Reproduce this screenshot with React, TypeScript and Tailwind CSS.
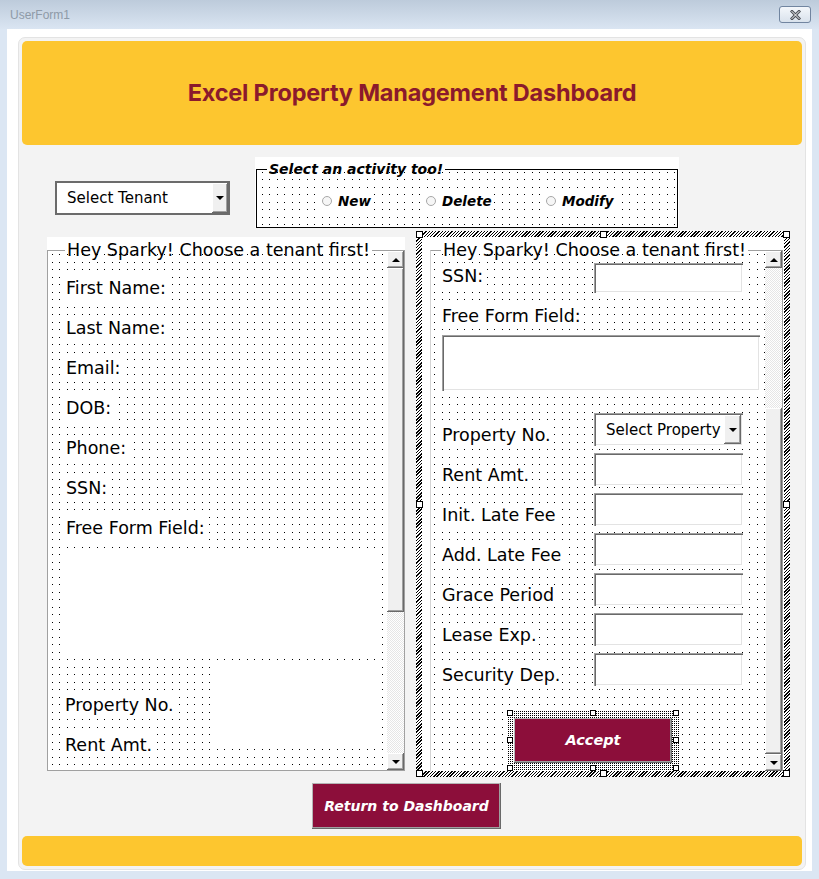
import React from "react";

const DOTS =
  "bg-white bg-[linear-gradient(90deg,#fff_7px,transparent_7px,transparent_8px,#fff_8px,#fff_14px,transparent_14px),linear-gradient(#fff_7px,#000_7px,#000_8px,#fff_8px,#fff_14px,#000_14px)] bg-[length:15px_15px] bg-fixed";

const COMIC = "font-['Comic_Sans_MS','DejaVu_Sans',sans-serif]";

const RAISED =
  "bg-[#f0f0f0] shadow-[inset_-1px_-1px_#696969,inset_1px_1px_#fff,inset_-2px_-2px_#a0a0a0]";

const SUNKEN =
  "bg-white shadow-[inset_1px_1px_#a0a0a0,inset_2px_2px_#696969,inset_-1px_-1px_#fff,inset_-2px_-2px_#e3e3e3]";

function Arrow({ up }: { up?: boolean }) {
  return up ? (
    <div className="w-0 h-0 border-x-[4px] border-x-transparent border-b-[4px] border-b-black" />
  ) : (
    <div className="w-0 h-0 border-x-[4px] border-x-transparent border-t-[4px] border-t-black" />
  );
}

function ScrollBtn({ up }: { up?: boolean }) {
  return (
    <div className={`w-[17px] h-[17px] shrink-0 flex items-center justify-center ${RAISED}`}>
      <Arrow up={up} />
    </div>
  );
}

function Track({ className }: { className: string }) {
  return (
    <div
      className={`w-[17px] bg-[repeating-conic-gradient(#e6e6e6_0_25%,#fff_0_50%)] bg-[length:2px_2px] ${className}`}
    />
  );
}

function Thumb({ className }: { className: string }) {
  return <div className={`w-[17px] ${RAISED} ${className}`} />;
}

function Legend({ children, left }: { children: React.ReactNode; left: string }) {
  return (
    <div
      className={`absolute -top-[13px] ${left} px-[2px] leading-[24px] text-[17.5px] text-black whitespace-nowrap bg-[linear-gradient(#fff_13px,transparent_13px)]`}
    >
      {children}
    </div>
  );
}

function Handle({ pos }: { pos: string }) {
  return <div className={`absolute w-[7px] h-[7px] bg-white border border-black ${pos}`} />;
}

function SmallHandle({ pos }: { pos: string }) {
  return <div className={`absolute w-[6px] h-[6px] bg-white border border-black ${pos}`} />;
}

function Label({ children }: { children: React.ReactNode }) {
  return (
    <span className="bg-white px-[2px] leading-[24px] text-[17.5px] text-black whitespace-nowrap">{children}</span>
  );
}

function Radio({ label }: { label: string }) {
  return (
    <span className="inline-flex items-center bg-white pr-[2px] leading-[18px]">
      <span className="w-[10px] h-[10px] rounded-full border border-[#a8a8a8] bg-[#f6f6f6] mr-[6px]" />
      {label}
    </span>
  );
}

const leftLabels = ["First Name:", "Last Name:", "Email:", "DOB:", "Phone:", "SSN:", "Free Form Field:"];
const rightRows = ["Rent Amt.", "Init. Late Fee", "Add. Late Fee", "Grace Period", "Lease Exp.", "Security Dep."];

export default function App() {
  return (
    <div className="w-[819px] h-[879px] bg-[#dbe6f3] flex flex-col overflow-hidden">
      {/* Title bar */}
      <div className="h-[29px] shrink-0 flex items-center justify-between pl-[10px] pr-[8px] bg-linear-to-b from-[#bdcbdb] to-[#dae5f2]">
        <span className="font-['Liberation_Sans',Arial,sans-serif] text-[12px] text-[#8e9aa7]">UserForm1</span>
        <div className="w-[32px] h-[17px] rounded-[3px] border border-[#7185a0] bg-linear-to-b from-[#f4f7fb] to-[#d9e2ec] flex items-center justify-center">
          <svg width="11" height="10" viewBox="0 0 11 10">
            <path d="M2 1.5 L9 8.5 M9 1.5 L2 8.5" stroke="#4a4f57" strokeWidth="3" strokeLinecap="square" />
            <path d="M2 1.5 L9 8.5 M9 1.5 L2 8.5" stroke="#ffffff" strokeWidth="1" strokeLinecap="square" />
          </svg>
        </div>
      </div>

      {/* Client area */}
      <div className="mx-[7px] h-[842px] bg-white pl-[11px] pt-[8px] pr-[6px] pb-[1px]">
        <div className="h-full border border-[#e3e3e3] rounded-[7px] bg-[#f3f3f3] p-[3px] flex flex-col">
          {/* Header */}
          <div className="h-[104px] shrink-0 rounded-[5px] bg-[#fdc62f] flex items-center justify-center">
            <h1 className="font-['Inter','Open_Sans',sans-serif] font-bold text-[23.5px] text-[#8b1a2c] tracking-[-0.2px]">
              Excel Property Management Dashboard
            </h1>
          </div>

          {/* Row 1 */}
          <div className={`flex items-start mt-[12px] pl-[33px] ${COMIC}`}>
            <div className="mt-[24px] w-[175px] h-[34px] border-2 border-[#6b6b6b] bg-white flex items-stretch">
              <div className="flex-1 flex items-center pl-[10px] text-[15px] text-black">Select Tenant</div>
              <div className={`w-[16px] flex items-center justify-center ${RAISED}`}>
                <Arrow />
              </div>
            </div>

            <div className="bg-white w-[424px] h-[71px] ml-[25px] pt-[12px] px-[1px]">
              <div className={`h-full border border-black relative ${DOTS}`}>
                <div className="absolute -top-[10px] left-[10px] px-[2px] leading-[18px] text-[14px] font-bold italic text-black whitespace-nowrap bg-[linear-gradient(#fff_10px,transparent_10px)]">
                  Select an activity too!
                </div>
                <div className="flex items-center pt-[21px] pl-[65px] text-[13.5px] font-bold italic text-black">
                  <div className="w-[104px]">
                    <Radio label="New" />
                  </div>
                  <div className="w-[120px]">
                    <Radio label="Delete" />
                  </div>
                  <div>
                    <Radio label="Modify" />
                  </div>
                </div>
              </div>
            </div>
          </div>

          {/* Row 2 */}
          <div className={`flex items-start mt-[3px] ${COMIC}`}>
            {/* Left frame */}
            <div className="bg-white w-[358px] h-[534px] ml-[25px] mt-[6px] pt-[13px]">
              <div className={`h-full border border-[#a0a0a0] relative flex ${DOTS}`}>
                <Legend left="left-[17px]">Hey Sparky! Choose a tenant first!</Legend>
                <div className="flex-1 flex flex-col pt-[17px]">
                  {leftLabels.map((l) => (
                    <div key={l} className="h-[40px] flex items-center pl-[16px]">
                      <Label>{l}</Label>
                    </div>
                  ))}
                  <div className="ml-[12px] w-[320px] h-[109px] bg-white" />
                  <div className="flex mt-[8px]">
                    <div className="w-[169px] pt-[20px] flex flex-col">
                      <div className="h-[40px] flex items-center pl-[15px]">
                        <Label>Property No.</Label>
                      </div>
                      <div className="h-[40px] flex items-center pl-[15px]">
                        <Label>Rent Amt.</Label>
                      </div>
                    </div>
                    <div className="w-[163px] h-[80px] bg-white" />
                  </div>
                </div>
                <div className="w-[17px] flex flex-col">
                  <ScrollBtn up />
                  <Thumb className="h-[344px]" />
                  <Track className="flex-1" />
                  <ScrollBtn />
                </div>
              </div>
            </div>

            {/* Right frame (selected) */}
            <div className="relative w-[374px] h-[546px] ml-[11px] p-[6px] bg-[repeating-linear-gradient(135deg,#000_0_1px,#fff_1px_2.3px)]">
              <div className="bg-white h-full pt-[13px] pl-[8px] pr-[1px] overflow-hidden">
                <div className={`h-full border border-b-0 border-[#a0a0a0] border-l-[#d4d4d4] relative flex ${DOTS}`}>
                  <Legend left="left-[10px]">Hey Sparky! Choose a tenant first!</Legend>
                  <div className="flex-1 flex flex-col">
                    <div className="mt-[12px] h-[30px] flex items-start">
                      <div className="w-[163px] pl-[9px] pt-[1px]">
                        <Label>SSN:</Label>
                      </div>
                      <div className={`w-[149px] h-[30px] ${SUNKEN}`} />
                    </div>
                    <div className="mt-[10px] h-[26px] pl-[9px] flex items-center">
                      <Label>Free Form Field:</Label>
                    </div>
                    <div className={`mt-[6px] ml-[11px] w-[318px] h-[57px] ${SUNKEN}`} />
                    <div className="mt-[22px] h-[33px] flex items-start">
                      <div className="w-[163px] pl-[9px] pt-[10px]">
                        <Label>Property No.</Label>
                      </div>
                      <div className={`w-[149px] h-[33px] p-[2px] flex items-stretch ${SUNKEN}`}>
                        <div className="flex-1 flex items-center pl-[10px] text-[15px] text-black whitespace-nowrap">
                          Select Property
                        </div>
                        <div className={`w-[17px] flex items-center justify-center ${RAISED}`}>
                          <Arrow />
                        </div>
                      </div>
                    </div>
                    {rightRows.map((r) => (
                      <div key={r} className="mt-[7px] h-[33px] flex items-start">
                        <div className="w-[163px] pl-[9px] pt-[10px]">
                          <Label>{r}</Label>
                        </div>
                        <div className={`w-[149px] h-[33px] ${SUNKEN}`} />
                      </div>
                    ))}
                    <div className="relative w-[172px] h-[61px] ml-[76px] mt-[24px] pl-[7px] pt-[8px] bg-[linear-gradient(90deg,#fff_1px,transparent_1px),linear-gradient(#fff_1px,#000_1px)] bg-[length:2px_2px]">
                      <button className="w-[158px] h-[45px] bg-[#8c0e3a] shadow-[inset_-1px_-1px_#696969,inset_1px_1px_#b4b4b4,inset_-2px_-2px_#a0a0a0] text-white font-bold italic text-[14.5px]">
                        Accept
                      </button>
                      <SmallHandle pos="top-0 left-0" />
                      <SmallHandle pos="top-0 left-[83px]" />
                      <SmallHandle pos="top-0 right-0" />
                      <SmallHandle pos="top-[27px] left-0" />
                      <SmallHandle pos="top-[27px] right-0" />
                      <SmallHandle pos="top-[55px] left-0" />
                      <SmallHandle pos="top-[55px] left-[83px]" />
                      <SmallHandle pos="top-[55px] right-0" />
                    </div>
                  </div>
                  <div className="w-[17px] flex flex-col">
                    <ScrollBtn up />
                    <Track className="h-[140px]" />
                    <Thumb className="flex-1" />
                    <ScrollBtn />
                  </div>
                </div>
              </div>
              <Handle pos="top-0 left-0" />
              <Handle pos="top-0 left-[calc(50%-3px)]" />
              <Handle pos="top-0 right-0" />
              <Handle pos="top-[calc(50%-3px)] left-0" />
              <Handle pos="top-[calc(50%-3px)] right-0" />
              <Handle pos="bottom-0 left-0" />
              <Handle pos="bottom-0 left-[calc(50%-3px)]" />
              <Handle pos="bottom-0 right-0" />
            </div>
          </div>

          {/* Return button */}
          <div className={`mt-[6px] ml-[290px] ${COMIC}`}>
            <button className="w-[189px] h-[46px] bg-[#8c0e3a] shadow-[inset_-1px_-1px_#696969,inset_1px_1px_#b4b4b4,inset_-2px_-2px_#a0a0a0] text-white font-bold italic text-[14px]">
              Return to Dashboard
            </button>
          </div>

          {/* Footer */}
          <div className="mt-[7px] h-[30px] shrink-0 rounded-[5px] bg-[#fdc62f]" />
        </div>
      </div>
    </div>
  );
}
